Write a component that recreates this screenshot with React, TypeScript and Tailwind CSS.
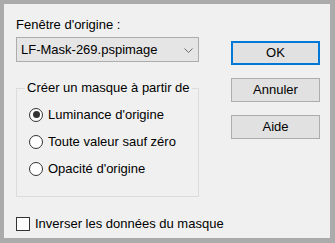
import React from "react";

const font = { fontFamily: '"Liberation Sans", Arial, sans-serif' };

function Radio({ checked, label }: { checked?: boolean; label: string }) {
  return (
    <div className="flex h-[27px] items-center gap-[5px]">
      <span className="flex h-[14px] w-[14px] items-center justify-center rounded-full border border-[#333333] bg-white">
        {checked && <span className="h-[7px] w-[7px] rounded-full bg-[#333333]" />}
      </span>
      <span className="whitespace-nowrap leading-[16px]">{label}</span>
    </div>
  );
}

function Btn({ label, primary }: { label: string; primary?: boolean }) {
  return (
    <div
      className={
        "flex h-[24px] w-[89px] items-center justify-center bg-[#e1e1e1] leading-[16px] " +
        (primary ? "border-2 border-[#0078d7]" : "border border-[#adadad]")
      }
    >
      {label}
    </div>
  );
}

export default function App() {
  return (
    <div
      className="h-[243px] w-[335px] bg-[#ababab] pb-[5px] pl-[4px] pr-[5px] pt-[4px] text-[13px] text-black"
      style={font}
    >
      <div className="flex h-full w-full items-start bg-[#f0f0f0] pl-[12px] pt-[13px]">
        <div className="flex w-[183px] flex-col">
          <div className="whitespace-nowrap leading-[15px]">Fenêtre d'origine :</div>
          <div className="mt-[5px] flex h-[25px] items-center justify-between border border-[#adadad] bg-[#e5e5e5] pl-[4px] pr-[5px]">
            <span className="whitespace-nowrap leading-[16px]">LF-Mask-269.pspimage</span>
            <svg width="9" height="5" viewBox="0 0 9 5" className="mt-[1px]">
              <path d="M0.5 0.5 L4.5 4.5 L8.5 0.5" fill="none" stroke="#6a6a6a" strokeWidth="1" />
            </svg>
          </div>
          <fieldset className="mt-[18px] border border-[#dcdcdc] pb-[14px] pl-[12px] pt-[5px]">
            <legend className="ml-[-4px] whitespace-nowrap px-[2px] leading-[16px]">Créer un masque à partir de</legend>
            <Radio checked label="Luminance d'origine" />
            <Radio label="Toute valeur sauf zéro" />
            <Radio label="Opacité d'origine" />
          </fieldset>
          <div className="mt-[19px] flex h-[16px] items-center gap-[5px]">
            <span className="h-[14px] w-[14px] shrink-0 border border-[#333333] bg-white" />
            <span className="whitespace-nowrap leading-[16px]">Inverser les données du masque</span>
          </div>
        </div>
        <div className="ml-[32px] mt-[24px] flex flex-col gap-[13px]">
          <Btn label="OK" primary />
          <Btn label="Annuler" />
          <Btn label="Aide" />
        </div>
      </div>
    </div>
  );
}
